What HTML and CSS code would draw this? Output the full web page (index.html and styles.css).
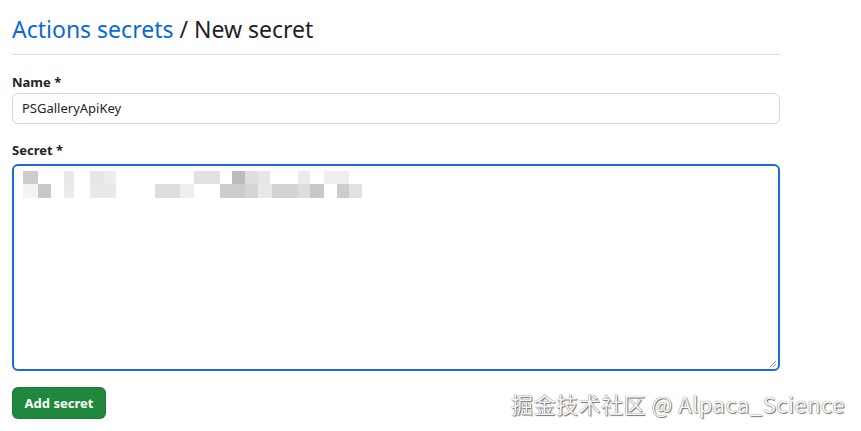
FILE: index.html
```html
<!DOCTYPE html>
<html lang="en">
<head>
<meta charset="utf-8">
<link rel="stylesheet" href="styles.css">
</head>
<body>
<main class="page">
  <h2 class="title"><a class="crumb" href="#">Actions secrets</a> / New secret</h2>
  <form class="form">
    <div class="field">
      <label class="label label-name">Name *</label>
      <div class="input">PSGalleryApiKey</div>
    </div>
    <div class="field">
      <label class="label label-secret">Secret *</label>
      <div class="textarea">
        <svg class="mosaic" width="360" height="28" viewBox="0 0 360 28">
          <rect x="9" y="0" width="15" height="13" fill="#cdcdcd"/>
          <rect x="50" y="0" width="10" height="13" fill="#e9e9e9"/>
          <rect x="76" y="0" width="14" height="13" fill="#e6e6e6"/>
          <rect x="90" y="0" width="12" height="13" fill="#ededed"/>
          <rect x="180" y="0" width="26" height="13" fill="#e1e1e1"/>
          <rect x="218" y="0" width="13" height="13" fill="#bcbcbc"/>
          <rect x="231" y="0" width="13" height="13" fill="#dedede"/>
          <rect x="244" y="0" width="12" height="13" fill="#e6e6e6"/>
          <rect x="284" y="0" width="12" height="13" fill="#ebebeb"/>
          <rect x="310" y="0" width="25" height="13" fill="#eeeeee"/>
          <rect x="9" y="13" width="15" height="14" fill="#f3f3f3"/>
          <rect x="24" y="13" width="13" height="14" fill="#c8c8c8"/>
          <rect x="50" y="13" width="10" height="14" fill="#ebebeb"/>
          <rect x="76" y="13" width="26" height="14" fill="#e8e8e8"/>
          <rect x="141" y="13" width="25" height="14" fill="#dddddd"/>
          <rect x="166" y="13" width="14" height="14" fill="#eeeeee"/>
          <rect x="206" y="13" width="25" height="14" fill="#cccccc"/>
          <rect x="231" y="13" width="13" height="14" fill="#d5d5d5"/>
          <rect x="244" y="13" width="14" height="14" fill="#e8e8e8"/>
          <rect x="258" y="13" width="26" height="14" fill="#d3d3d3"/>
          <rect x="284" y="13" width="12" height="14" fill="#dddddd"/>
          <rect x="296" y="13" width="14" height="14" fill="#c8c8c8"/>
          <rect x="323" y="13" width="12" height="14" fill="#cccccc"/>
          <rect x="335" y="13" width="13" height="14" fill="#e1e1e1"/>
        </svg>
        <svg class="grip" width="8" height="8" viewBox="0 0 8 8">
          <path d="M7 1 L1 7 M7 4 L4 7" stroke="#8c959f" stroke-width="1"/>
        </svg>
      </div>
    </div>
    <button class="btn" type="button">Add secret</button>
  </form>
  <div class="watermark">掘金技术社区 @ Alpaca_Science</div>
</main>
</body>
</html>
```
FILE: styles.css
```css
* { box-sizing: border-box; }
html, body { margin: 0; padding: 0; background: #ffffff; }
body {
  font-family: "Noto Sans", "Liberation Sans", sans-serif;
  color: #1f2328;
  width: 861px;
  height: 431px;
  overflow: hidden;
}
.page {
  position: relative;
  width: 861px;
  height: 431px;
  padding: 12px 0 0 12px;
}
.title {
  margin: 0;
  width: 768px;
  font-size: 23px;
  font-weight: 400;
  line-height: 34px;
  padding-bottom: 8px;
  border-bottom: 1px solid #d8dee4;
  color: #1f2328;
}
.crumb { color: #0969da; text-decoration: none; }
.form {
  width: 768px;
  display: flex;
  flex-direction: column;
  padding-top: 17px;
}
.field { display: flex; flex-direction: column; margin-bottom: 16px; }
.label {
  font-size: 13px;
  font-weight: 700;
  line-height: 20px;
}
.label-name { margin-bottom: 1px; }
.label-secret { margin-bottom: 4px; }
.input {
  height: 31px;
  border: 1px solid #d0d7de;
  border-radius: 6px;
  padding: 0 9px;
  font-size: 13px;
  line-height: 29px;
  background: #ffffff;
}
.textarea {
  position: relative;
  height: 207px;
  border: 2px solid #1b6bd0;
  border-radius: 6px;
  background: #ffffff;
}
.mosaic { position: absolute; left: 0; top: 5px; }
.grip { position: absolute; right: 1px; bottom: 1px; }
.btn {
  align-self: flex-start;
  width: 94px;
  height: 32px;
  border: 1px solid rgba(31, 35, 40, 0.15);
  border-radius: 6px;
  background: #1f883d;
  color: #ffffff;
  font-family: "Noto Sans", "Liberation Sans", sans-serif;
  font-size: 13px;
  font-weight: 700;
  padding: 0;
}
.watermark {
  position: absolute;
  left: 511px;
  top: 388px;
  font-family: "Noto Sans CJK SC", "Noto Sans", sans-serif;
  font-size: 22px;
  line-height: 30px;
  letter-spacing: 0.5px;
  color: #f7f7f7;
  text-shadow: 0 0 1px #555555, 1px 1px 1px #777777;
  white-space: nowrap;
}
```
